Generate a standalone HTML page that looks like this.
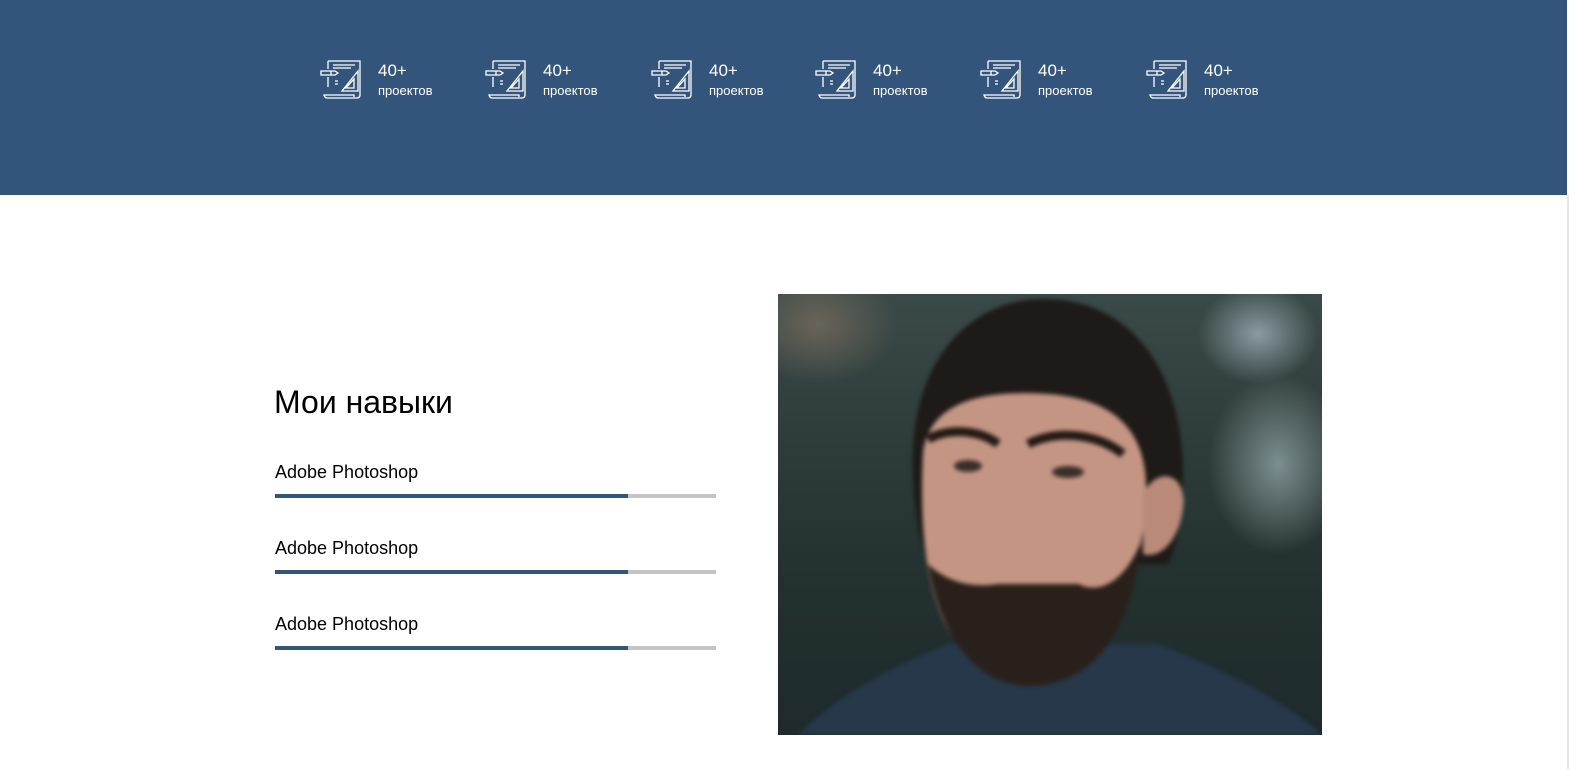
<!DOCTYPE html>
<html><head><meta charset="utf-8"><style>
*{margin:0;padding:0;box-sizing:border-box}
body{width:1584px;height:769px;background:#fff;font-family:"Liberation Sans",sans-serif;position:relative;overflow:hidden}
.top{position:absolute;left:0;top:0;width:1567px;height:195px;background:#34557b}
.sb{position:absolute;left:1567px;top:195px;width:17px;height:574px;background:#fff;border-left:2px solid #e8e8e8}
.it{position:absolute;top:57px;color:#fff}
.it svg{position:absolute;left:0;top:0}
.it b{position:absolute;left:58px;top:4px;font-size:17px;font-weight:normal}
.it span{position:absolute;left:58px;top:26px;font-size:13px;white-space:nowrap}
h2{position:absolute;left:274px;top:384px;font-size:32px;font-weight:normal;color:#000}
.sk{position:absolute;left:275px;font-size:18px;color:#000}
.bar{position:absolute;left:275px;width:441px;height:4px;background:#c4c4c4}
.bar i{display:block;width:353px;height:4px;background:#34557b}
.ph{position:absolute;left:778px;top:294px;width:544px;height:441px;overflow:hidden;
background:radial-gradient(ellipse 60px 50px at 480px 40px,#8a9aa0,transparent),radial-gradient(ellipse 80px 60px at 40px 30px,#6a6458,transparent),radial-gradient(ellipse 70px 90px at 500px 170px,#7d8e90,transparent),linear-gradient(180deg,#3a4a48,#243230 60%,#1e2a2c)}
.ph svg{filter:blur(2px)}
</style></head><body>
<div class="top"></div><div class="sb"></div>
<div class="it" style="left:320px"><svg width="44" height="42" viewBox="0 0 44 42" fill="none" stroke="#fff" stroke-width="1.3"><path d="M8 4h32v34M8 4v8M8 20v10M40 38c0 3-3 3-3 3H7c-2 0-3-3-3-3h30v2"/><path d="M13 8h22M13 11h18M1 14h14l3 2-3 2H1zM11 14v4M15 24h3M15 27h3"/><path d="M22 34h16V14zM26 31h8v-9z"/></svg><b>40+</b><span>проектов</span></div>
<div class="it" style="left:485px"><svg width="44" height="42" viewBox="0 0 44 42" fill="none" stroke="#fff" stroke-width="1.3"><path d="M8 4h32v34M8 4v8M8 20v10M40 38c0 3-3 3-3 3H7c-2 0-3-3-3-3h30v2"/><path d="M13 8h22M13 11h18M1 14h14l3 2-3 2H1zM11 14v4M15 24h3M15 27h3"/><path d="M22 34h16V14zM26 31h8v-9z"/></svg><b>40+</b><span>проектов</span></div>
<div class="it" style="left:651px"><svg width="44" height="42" viewBox="0 0 44 42" fill="none" stroke="#fff" stroke-width="1.3"><path d="M8 4h32v34M8 4v8M8 20v10M40 38c0 3-3 3-3 3H7c-2 0-3-3-3-3h30v2"/><path d="M13 8h22M13 11h18M1 14h14l3 2-3 2H1zM11 14v4M15 24h3M15 27h3"/><path d="M22 34h16V14zM26 31h8v-9z"/></svg><b>40+</b><span>проектов</span></div>
<div class="it" style="left:815px"><svg width="44" height="42" viewBox="0 0 44 42" fill="none" stroke="#fff" stroke-width="1.3"><path d="M8 4h32v34M8 4v8M8 20v10M40 38c0 3-3 3-3 3H7c-2 0-3-3-3-3h30v2"/><path d="M13 8h22M13 11h18M1 14h14l3 2-3 2H1zM11 14v4M15 24h3M15 27h3"/><path d="M22 34h16V14zM26 31h8v-9z"/></svg><b>40+</b><span>проектов</span></div>
<div class="it" style="left:980px"><svg width="44" height="42" viewBox="0 0 44 42" fill="none" stroke="#fff" stroke-width="1.3"><path d="M8 4h32v34M8 4v8M8 20v10M40 38c0 3-3 3-3 3H7c-2 0-3-3-3-3h30v2"/><path d="M13 8h22M13 11h18M1 14h14l3 2-3 2H1zM11 14v4M15 24h3M15 27h3"/><path d="M22 34h16V14zM26 31h8v-9z"/></svg><b>40+</b><span>проектов</span></div>
<div class="it" style="left:1146px"><svg width="44" height="42" viewBox="0 0 44 42" fill="none" stroke="#fff" stroke-width="1.3"><path d="M8 4h32v34M8 4v8M8 20v10M40 38c0 3-3 3-3 3H7c-2 0-3-3-3-3h30v2"/><path d="M13 8h22M13 11h18M1 14h14l3 2-3 2H1zM11 14v4M15 24h3M15 27h3"/><path d="M22 34h16V14zM26 31h8v-9z"/></svg><b>40+</b><span>проектов</span></div>

<h2>Мои навыки</h2>
<div class="sk" style="top:462px">Adobe Photoshop</div><div class="bar" style="top:494px"><i></i></div>
<div class="sk" style="top:538px">Adobe Photoshop</div><div class="bar" style="top:570px"><i></i></div>
<div class="sk" style="top:614px">Adobe Photoshop</div><div class="bar" style="top:646px"><i></i></div>

<div class="ph"><svg width="544" height="441" viewBox="0 0 544 441">
<path d="M20 441 C60 400 120 370 170 350 L380 350 C430 370 500 400 544 441Z" fill="#26384a"/>
<path d="M135 180 C130 70 190 5 265 5 C350 5 400 70 405 170 C405 220 400 250 390 270 L150 270 C140 240 136 210 135 180Z" fill="#1e1a17"/>
<path d="M145 160 C150 110 200 95 270 100 C340 105 370 140 368 200 C366 260 350 320 300 360 C270 385 220 385 190 360 C155 330 140 260 145 160Z" fill="#c49583"/>
<path d="M150 270 C160 330 190 390 250 392 C320 392 355 330 362 250 C345 290 320 300 300 290 L220 290 C190 295 165 285 150 270Z" fill="#2a201b"/>
<path d="M150 145 C175 132 205 138 220 150 M250 150 C280 135 320 140 345 160" stroke="#231a15" stroke-width="9" fill="none"/>
<ellipse cx="190" cy="172" rx="14" ry="6" fill="#3b2f2a"/><ellipse cx="290" cy="178" rx="16" ry="6" fill="#3b2f2a"/>
<path d="M365 200 C380 170 410 180 405 215 C400 250 380 265 365 260Z" fill="#b98a78"/>
</svg></div>
</body></html>
